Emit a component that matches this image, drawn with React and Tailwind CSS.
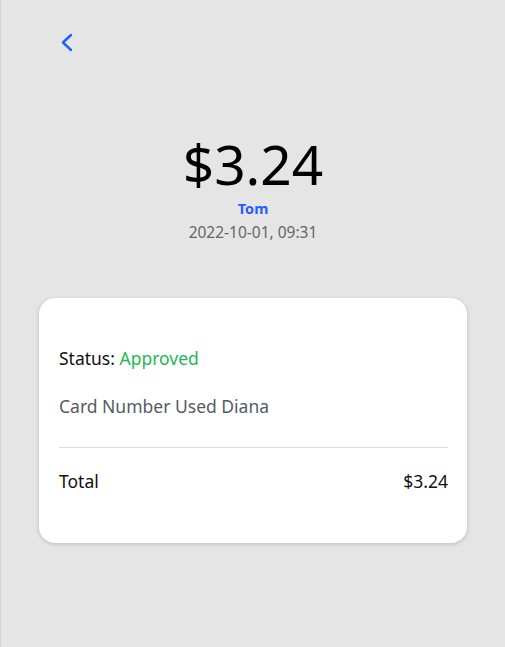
import React from 'react'

export default function App() {
  return (
    <div className="min-h-[647px] bg-[#e5e5e5] border-l border-[#d2d2d2] font-['Noto_Sans',_'Open_Sans',sans-serif]">
      <div className="pt-[33px] pl-[59px]">
        <button className="block w-[16px] h-[20px]">
          <svg width="16" height="20" viewBox="0 0 16 20" fill="none">
            <path d="M11 2 L3 9.5 L11 17" stroke="#1f5eff" strokeWidth="2.4" strokeLinecap="round" strokeLinejoin="round" />
          </svg>
        </button>
      </div>

      <div className="flex flex-col items-center mt-[83px]">
        <div className="text-[55px] leading-[56px] text-black">$3.24</div>
        <div className="mt-[7px] text-[14.5px] leading-[18px] font-bold text-[#1f5eff]">Tom</div>
        <div className="mt-[5px] text-[15.5px] leading-[20px] text-[#666666]">2022-10-01, 09:31</div>
      </div>

      <div className="mx-[38px] mt-[56px] bg-white rounded-[16px] shadow-[0_1px_4px_rgba(0,0,0,0.18)] pl-[20px] pr-[19px] pt-[48px] pb-[50px]">
        <div className="text-[17.5px] leading-[24px] text-[#111111]">
          Status: <span className="text-[#1db954]">Approved</span>
        </div>
        <div className="mt-[24px] text-[17.5px] leading-[24px] text-[#555b66]">Card Number Used Diana</div>
        <div className="mt-[29px] border-t border-[#d9dde3]" />
        <div className="mt-[21px] flex justify-between text-[17.5px] leading-[24px] text-[#111111]">
          <span>Total</span>
          <span>$3.24</span>
        </div>
      </div>
    </div>
  )
}
